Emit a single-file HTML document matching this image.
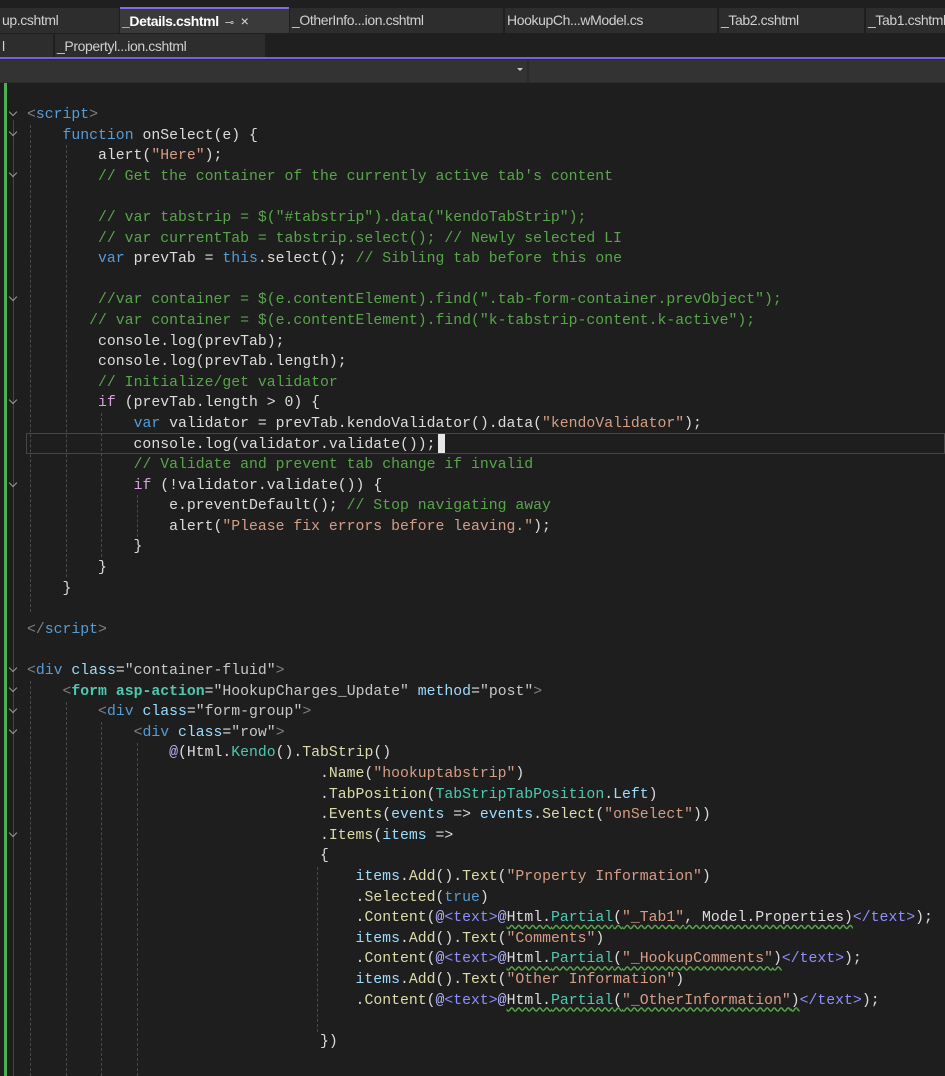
<!DOCTYPE html>
<html><head><meta charset="utf-8"><style>
*{margin:0;padding:0;box-sizing:border-box}
body{width:945px;height:1076px;background:#1e1e1e;overflow:hidden;position:relative;font-family:"Liberation Sans",sans-serif}
.bar{position:absolute;left:0;width:945px}
.tab{position:absolute;height:25px;background:#2d2d2d;color:#d0d0d0;font-size:14px;line-height:24px;padding-left:2px;white-space:nowrap;overflow:hidden;letter-spacing:-0.4px}
.code{position:absolute;left:27px;top:105px;font-family:"Liberation Mono",monospace;font-size:14.8px;line-height:20.6px;white-space:pre;color:#dcdcdc}
.k{color:#569cd6}.s{color:#d69d85}.c{color:#57a64a}.p{color:#d8a0df}.g{color:#808080}.a{color:#9cdcfe}.m{color:#dcdcaa}.t{color:#4ec9b0}.tb{color:#4ec9b0;font-weight:bold}.v{color:#c8c8c8}.at{color:#b4b4ff}.tt{color:#8f8fff}
.w{text-decoration:underline wavy #57a64a;text-underline-offset:3px}
.gd{position:absolute;width:0;border-left:1px dashed #4a4a4a}
.ch{position:absolute;left:10px;width:6px;height:6px;border-right:1px solid #9a9a9a;border-bottom:1px solid #9a9a9a;transform:rotate(45deg)}
</style></head><body>
<div class="bar" style="top:0;height:60px;background:#1f1f1f"></div>
<div class="tab" style="left:0;top:8px;width:119px">up.cshtml</div>
<div class="tab" style="left:120px;top:7px;width:169px;height:26px;background:#3a3a3a;color:#fff;font-weight:bold;border-top:2px solid #7b6cf0">_Details.cshtml <span style="font-weight:normal;font-size:11px;color:#ccc">&nbsp;⊸</span> <span style="font-weight:normal;color:#ddd">&nbsp;×</span></div>
<div class="tab" style="left:290px;top:8px;width:213px">_OtherInfo...ion.cshtml</div>
<div class="tab" style="left:505px;top:8px;width:212px">HookupCh...wModel.cs</div>
<div class="tab" style="left:719px;top:8px;width:145px">_Tab2.cshtml</div>
<div class="tab" style="left:866px;top:8px;width:79px">_Tab1.cshtml</div>
<div class="tab" style="left:0;top:34px;width:53px">l</div>
<div class="tab" style="left:55px;top:34px;width:210px">_Propertyl...ion.cshtml</div>
<div class="bar" style="top:57px;height:2px;background:#7160e8"></div>
<div class="bar" style="top:59px;height:24px;background:#2b2b2b"></div>
<div style="position:absolute;left:0;top:60px;width:527px;height:22px;background:#333"></div>
<div style="position:absolute;left:529px;top:60px;width:416px;height:22px;background:#333"></div>
<div style="position:absolute;left:517px;top:68px;border-left:3px solid transparent;border-right:3px solid transparent;border-top:3px solid #ccc"></div>
<div style="position:absolute;left:4px;top:83px;width:3px;height:993px;background:#4caf50"></div>
<div style="position:absolute;left:13px;top:120px;width:1px;height:956px;background:#444"></div>
<div style="position:absolute;left:26px;top:433px;width:919px;height:21px;border:1px solid #464646"></div>
<div class="gd" style="left:30px;top:125px;height:487px"></div>
<div class="gd" style="left:66px;top:145px;height:432px"></div>
<div class="gd" style="left:101px;top:413px;height:144px"></div>
<div class="gd" style="left:137px;top:495px;height:42px"></div>
<div class="gd" style="left:30px;top:681px;height:395px"></div>
<div class="gd" style="left:66px;top:702px;height:374px"></div>
<div class="gd" style="left:101px;top:722px;height:354px"></div>
<div class="gd" style="left:137px;top:743px;height:333px"></div>
<div class="gd" style="left:317px;top:867px;height:165px"></div>
<div class="ch" style="top:109px"></div><div class="ch" style="top:129px"></div><div class="ch" style="top:170px"></div><div class="ch" style="top:294px"></div><div class="ch" style="top:397px"></div><div class="ch" style="top:480px"></div><div class="ch" style="top:665px"></div><div class="ch" style="top:685px"></div><div class="ch" style="top:706px"></div><div class="ch" style="top:727px"></div><div class="ch" style="top:830px"></div>
<div style="position:absolute;left:438px;top:434px;width:7px;height:19px;background:#e6e6e6"></div>
<div class="code"><span class="g">&lt;</span><span class="k">script</span><span class="g">&gt;</span>
    <span class="k">function</span> onSelect(e) {
        alert(<span class="s">"Here"</span>);
        <span class="c">// Get the container of the currently active tab's content</span>

        <span class="c">// var tabstrip = $("#tabstrip").data("kendoTabStrip");</span>
        <span class="c">// var currentTab = tabstrip.select(); // Newly selected LI</span>
        <span class="k">var</span> prevTab = <span class="k">this</span>.select(); <span class="c">// Sibling tab before this one</span>

        <span class="c">//var container = $(e.contentElement).find(".tab-form-container.prevObject");</span>
       <span class="c">// var container = $(e.contentElement).find("k-tabstrip-content.k-active");</span>
        console.log(prevTab);
        console.log(prevTab.length);
        <span class="c">// Initialize/get validator</span>
        <span class="p">if</span> (prevTab.length &gt; 0) {
            <span class="k">var</span> validator = prevTab.kendoValidator().data(<span class="s">"kendoValidator"</span>);
            console.log(validator.validate());
            <span class="c">// Validate and prevent tab change if invalid</span>
            <span class="p">if</span> (!validator.validate()) {
                e.preventDefault(); <span class="c">// Stop navigating away</span>
                alert(<span class="s">"Please fix errors before leaving."</span>);
            }
        }
    }

<span class="g">&lt;/</span><span class="k">script</span><span class="g">&gt;</span>

<span class="g">&lt;</span><span class="k">div</span> <span class="a">class</span>=<span class="v">"container-fluid"</span><span class="g">&gt;</span>
    <span class="g">&lt;</span><span class="tb">form</span> <span class="tb">asp-action</span>=<span class="v">"HookupCharges_Update"</span> <span class="a">method</span>=<span class="v">"post"</span><span class="g">&gt;</span>
        <span class="g">&lt;</span><span class="k">div</span> <span class="a">class</span>=<span class="v">"form-group"</span><span class="g">&gt;</span>
            <span class="g">&lt;</span><span class="k">div</span> <span class="a">class</span>=<span class="v">"row"</span><span class="g">&gt;</span>
                <span class="at">@</span>(Html.<span class="t">Kendo</span>().<span class="m">TabStrip</span>()
                                 .<span class="m">Name</span>(<span class="s">"hookuptabstrip"</span>)
                                 .<span class="m">TabPosition</span>(<span class="t">TabStripTabPosition</span>.<span class="a">Left</span>)
                                 .<span class="m">Events</span>(<span class="a">events</span> =&gt; <span class="a">events</span>.<span class="m">Select</span>(<span class="s">"onSelect"</span>))
                                 .<span class="m">Items</span>(<span class="a">items</span> =&gt;
                                 {
                                     <span class="a">items</span>.<span class="m">Add</span>().<span class="m">Text</span>(<span class="s">"Property Information"</span>)
                                     .<span class="m">Selected</span>(<span class="k">true</span>)
                                     .<span class="m">Content</span>(<span class="at">@</span><span class="tt">&lt;text&gt;</span><span class="at">@</span><span class="w">Html.<span class="t">Partial</span>(<span class="s">"_Tab1"</span>, Model.Properties)</span><span class="tt">&lt;/text&gt;</span>);
                                     <span class="a">items</span>.<span class="m">Add</span>().<span class="m">Text</span>(<span class="s">"Comments"</span>)
                                     .<span class="m">Content</span>(<span class="at">@</span><span class="tt">&lt;text&gt;</span><span class="at">@</span><span class="w">Html.<span class="t">Partial</span>(<span class="s">"_HookupComments"</span>)</span><span class="tt">&lt;/text&gt;</span>);
                                     <span class="a">items</span>.<span class="m">Add</span>().<span class="m">Text</span>(<span class="s">"Other Information"</span>)
                                     .<span class="m">Content</span>(<span class="at">@</span><span class="tt">&lt;text&gt;</span><span class="at">@</span><span class="w">Html.<span class="t">Partial</span>(<span class="s">"_OtherInformation"</span>)</span><span class="tt">&lt;/text&gt;</span>);

                                 })
</div>
</body></html>
